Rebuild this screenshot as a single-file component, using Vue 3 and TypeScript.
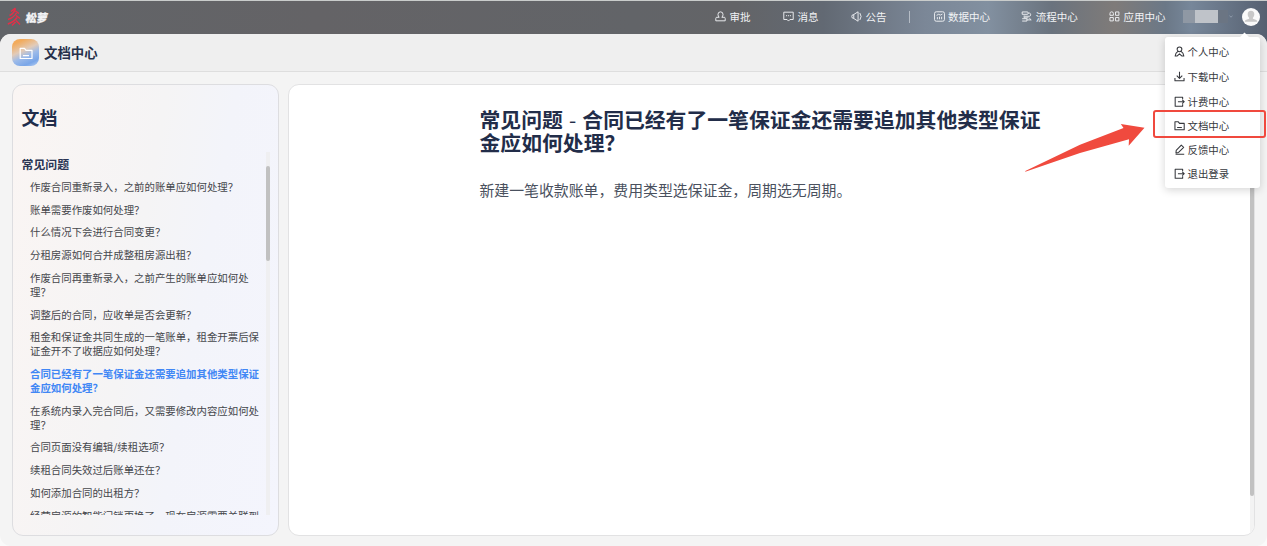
<script setup lang="ts">
type IconName = 'stamp' | 'message' | 'horn' | 'chart' | 'flow' | 'apps' | 'user' | 'download' | 'exit' | 'folder' | 'edit'

const icons: Record<IconName, string> = {
  stamp: 'M5.300 8Q3.800 6.500 3.800 4.300a3.200 3.200 0 0 1 6.400 0Q10.200 6.500 8.700 8M5.300 8H2.200Q1 8 1 9.500V12.500H13V9.500Q13 8 11.800 8H8.700',
  message: 'M1 1.500h12v9.300H8.800L7 12.800 5.200 10.800H1zM3.800 6h1.400M6.300 6h1.400M8.800 6h1.400',
  horn: 'M3.500 4.500v5L9 13V1zM3.500 4.500Q1 4.500 1 7t2.500 2.500M11.200 2.500Q14.500 7 11.200 11.500',
  chart: 'M3 1h8q2.300 0 2.300 2v8q0 2-2.300 2H3Q.700 13 .700 11V3Q.700 1 3 1zM3.300 5.500l2.700-1.300 2 1 2.700-1.300M4.300 10.500V7.800M7 10.500V7.300M9.700 10.500V7.300',
  flow: 'M1.500 1.200h6.300q1.500 0 1.500 1.500T7.800 4.200H1.500zM4 5.700v3h5.500M9.300 2.700h1.500q1.500.300 1.500 2t-1.500 2H4.500M1.500 9.800h6v3h-6M7.500 11.300h5.500M10.500 9l2.500 2.300',
  apps: 'M1.200 3.500a2.200 2.200 0 0 1 4.400-.500v2.500H1.200zM8.300 1.200h4.300v4.300H8.300zM1.200 8.300h4.300v4.300H1.200zM8.300 8.300h4.300v4.300H8.300z',
  user: 'M7 1.200a3 3 0 1 1 0 6 3 3 0 0 1 0-6zM4.800 7Q2 8.500 1.500 12.700h2.700L7 10l2.800 2.700h2.700Q12 8.500 9.200 7',
  download: 'M7 1v8.500M3.500 6L7 9.500 10.500 6M1.200 9v3.500h11.600V9',
  exit: 'M11 4V1.500H1.500v11.500H11V10.500M5 7.200h8M10.500 4.800L13 7.200l-2.500 2.400',
  folder: 'M1.200 2.300h4.300l1.500 2h6v8.200H1.200zM4 9.600h6',
  edit: 'M2.800 8.200L9.300 1.500l3 2.700-6.500 6.500-3.300.6zM2 13h11',
}

const work: { icon: IconName; label: string }[] = [
  { icon: 'stamp', label: '审批' },
  { icon: 'message', label: '消息' },
  { icon: 'horn', label: '公告' },
]
const centers: { icon: IconName; label: string }[] = [
  { icon: 'chart', label: '数据中心' },
  { icon: 'flow', label: '流程中心' },
  { icon: 'apps', label: '应用中心' },
]
const menu: { icon: IconName; label: string }[] = [
  { icon: 'user', label: '个人中心' },
  { icon: 'download', label: '下载中心' },
  { icon: 'exit', label: '计费中心' },
  { icon: 'folder', label: '文档中心' },
  { icon: 'edit', label: '反馈中心' },
  { icon: 'exit', label: '退出登录' },
]
const active = 7
const questions: string[] = [
  '作废合同重新录入，之前的账单应如何处理？',
  '账单需要作废如何处理？',
  '什么情况下会进行合同变更？',
  '分租房源如何合并成整租房源出租？',
  '作废合同再重新录入，之前产生的账单应如何处\n理？',
  '调整后的合同，应收单是否会更新？',
  '租金和保证金共同生成的一笔账单，租金开票后保\n证金开不了收据应如何处理？',
  '合同已经有了一笔保证金还需要追加其他类型保证\n金应如何处理？',
  '在系统内录入完合同后，又需要修改内容应如何处\n理？',
  '合同页面没有编辑/续租选项？',
  '续租合同失效过后账单还在？',
  '如何添加合同的出租方？',
  '经营房源的智能门锁更换了，现在房源需要关联到',
]
</script>

<template>
  <div class="app">
    <header class="topbar">
      <div class="brand">
        <svg class="tree" viewBox="0 0 14 19">
          <path d="M4 4.500L8.500 1M2.500 8.500Q7 6.500 8.500 1.500M8.500 4L12 6.500M1 12.500Q7 10.500 9.500 6M9 8.500l4 3M.800 17Q7 15 10 10.500M9 13.500l4 4M5 18.500L8.500 15" />
        </svg>
        <span>松萝</span>
      </div>
      <nav class="nav">
        <a v-for="n in work" :key="n.label" class="work"><svg viewBox="0 0 14 14"><path :d="icons[n.icon]" /></svg>{{ n.label }}</a>
        <i class="divider"></i>
        <a v-for="n in centers" :key="n.label" class="center"><svg viewBox="0 0 14 14"><path :d="icons[n.icon]" /></svg>{{ n.label }}</a>
      </nav>
      <div class="account">
        <span class="name"><i></i><i></i><i></i></span>
        <svg class="caret" viewBox="0 0 4 3"><path d="M.5.8L2 2.200 3.500.8" /></svg>
        <svg class="avatar" viewBox="0 0 18 18">
          <circle cx="9" cy="9" r="9" fill="#fafafa" />
          <path d="M9 2.800c2.200 0 3.300 1.400 3.300 3.500 0 1.400-.6 2.700-1.400 3.400v1l3.400 1.400q.9.400.9 1.700H2.800q0-1.300.9-1.700l3.400-1.400v-1C6.300 9 5.700 7.700 5.700 6.300c0-2.100 1.100-3.500 3.300-3.500z" fill="#c8c8c8" />
        </svg>
      </div>
    </header>

    <div class="shell">
      <div class="pagehead">
        <span class="badge"><svg viewBox="0 0 14 14"><path :d="icons.folder" /></svg></span>
        <h1>文档中心</h1>
      </div>
      <div class="body">
        <aside class="side">
          <h2>文档</h2>
          <div class="scroller">
            <div class="list">
              <h3>常见问题</h3>
              <ul>
                <li v-for="(q, i) in questions" :key="i" :class="{ active: i === active }">{{ q }}</li>
              </ul>
            </div>
            <div class="track"><div class="thumb"></div></div>
          </div>
        </aside>
        <main class="main">
          <article>
            <h2>常见问题<span class="dash">-</span>合同已经有了一笔保证金还需要追加其他类型保证<br>金应如何处理？</h2>
            <p>新建一笔收款账单，费用类型选保证金，周期选无周期。</p>
          </article>
          <div class="main-track"><div class="main-thumb"></div></div>
        </main>
      </div>
    </div>

    <div class="menu">
      <a v-for="m in menu" :key="m.label"><svg viewBox="0 0 14 14"><path :d="icons[m.icon]" /></svg>{{ m.label }}</a>
    </div>
    <div class="highlight"></div>
    <svg class="arrow" viewBox="0 0 120 50">
      <path d="M.3 48.900L55 22.800 98.500 6 95.800 2l23.700 3.800-15.800 18 .3-6.600L55 31 .3 49.700z" fill="#f04a3e" />
    </svg>
  </div>
</template>

<style>
body { overflow: hidden; background: #fafafa; }
</style>

<style scoped>
* { box-sizing: border-box; }
.app {
  position: relative;
  width: 1267px;
  height: 546px;
  overflow: hidden;
  font-family: "Noto Sans CJK SC", sans-serif;
  font-size: 10.42px;
  color: #45474c;
  background: #fafafa linear-gradient(90deg, #616468 0, #646366 25%, #626468 50%, #636467 58%, #626973 65%, #7b8797 73%, #8290a0 78%, #6a737e 83%, #7f7b79 88%, #6b7887 92%, #77879a 94%, #566070 100%) 0 0 / 100% 50px no-repeat;
}
h1, h2, h3, p, ul { margin: 0; padding: 0; }
svg path { stroke-linejoin: round; }
.topbar {
  display: flex;
  align-items: center;
  height: 34px;
  padding-bottom: 2px;
  border-top: 1px solid #c9cccb;
  color: #f2f3f5;
}
.brand { display: flex; flex: none; align-items: center; width: 715px; padding-left: 7px; gap: 5px; }
.tree { width: 14px; height: 19px; fill: none; stroke: #e23048; stroke-width: 1.5; }
.brand span { font-size: 11px; line-height: 16px; font-weight: 900; transform: skewX(-8deg); -webkit-text-stroke: .3px #f2f3f5; }
.nav { display: flex; flex: none; align-items: center; width: 467.5px; }
.nav a { display: flex; flex: none; align-items: center; white-space: nowrap; font-size: 10.5px; }
.nav svg { width: 11px; height: 11px; margin-right: 3.5px; fill: none; stroke: #eef0f3; stroke-width: 1.2; }
.work { width: 68px; }
.work:nth-child(3) { width: 58px; }
.divider { flex: none; width: 1px; height: 12px; margin-right: 23.5px; background: #b5bcc5; }
.center { width: 87.8px; }
.account { display: flex; align-items: center; }
.name { display: flex; width: 45px; height: 13px; }
.name i { width: 12px; background: #8f98a4; }
.name i:nth-child(2) { width: 23px; background: #bfc3c9; }
.name i:nth-child(3) { width: 10px; background: #6b7583; }
.caret { width: 4px; height: 3px; margin: 0 9px 0 1px; fill: none; stroke: #9ba6b5; stroke-width: .8; }
.avatar { width: 18px; height: 18px; }
.shell { height: 512px; background: #f4f4f4; border-radius: 11px; overflow: hidden; }
.pagehead {
  display: flex;
  align-items: center;
  height: 38px;
  padding-left: 12px;
  background: #efefef;
  border-bottom: 1px solid #dedede;
}
.badge {
  display: flex;
  align-items: center;
  justify-content: center;
  width: 27px;
  height: 27px;
  border-radius: 8px;
  background: linear-gradient(155deg, #f2ab5c 15%, #e2cbb8 42%, #9dbbe9 60%, #79a6e8 82%, #b9d1f3 100%);
}
.badge svg { width: 14px; height: 14px; fill: none; stroke: #fff; stroke-width: 1.2; }
.pagehead h1 { margin-left: 5px; padding-bottom: 2px; font-size: 13.4px; line-height: 20px; color: #26304a; }
.body { display: flex; gap: 9px; padding: 12px 12px 0; }
.side {
  width: 267px;
  height: 452px;
  padding: 20px 8px 0 8.500px;
  border: 1px solid #dddde0;
  border-radius: 11px;
  background: linear-gradient(100deg, #faf5f3 0, #f5f4f5 45%, #f3f4fa 65%, #f4f5fd 100%);
}
.side h2 { font-size: 17.9px; line-height: 24px; color: #202c4b; }
.scroller { display: flex; justify-content: space-between; height: 363px; margin-top: 23px; overflow: hidden; }
.list { width: 240px; }
.list h3 { font-size: 11.9px; line-height: 16px; margin-top: 4px; color: #2a3553; }
.list ul { list-style: none; padding: 8px 0 0 8.500px; }
.list li { margin-bottom: 8.73px; line-height: 14px; white-space: pre; }
.list li.active { color: #4187f5; font-weight: 700; }
.track { width: 4px; background: #efeff1; }
.thumb { height: 95px; margin-top: 14px; border-radius: 2px; background: #c1c1c1; }
.main {
  display: flex;
  justify-content: space-between;
  width: 967px;
  height: 452px;
  border: 1px solid #e2e2e3;
  border-radius: 11px;
  background: #fff;
  overflow: hidden;
}
article { padding: 23px 0 0 190.500px; }
article h2 { font-size: 20.83px; line-height: 23px; white-space: nowrap; color: #222d49; }
.dash { display: inline-block; width: 19.5px; text-align: center; font-weight: 400; }
article p { margin-top: 25px; font-size: 14.88px; line-height: 22px; color: #4a515e; }
.main-track { width: 4px; background: #f3f3f3; }
.main-thumb { height: 411px; background: #c1c1c1; border-radius: 2px; }
.menu {
  position: absolute;
  left: 1165px;
  top: 37px;
  width: 95px;
  height: 151px;
  padding: 1.6px 9px 0;
  border-radius: 3px;
  background: #fff;
  box-shadow: 0 2px 8px rgba(0, 0, 0, .17);
}
.menu::before {
  content: "";
  position: absolute;
  left: 76px;
  top: -3px;
  width: 7px;
  height: 7px;
  background: #fff;
  transform: rotate(45deg);
}
.menu a { display: flex; align-items: center; height: 24px; color: #36383d; }
.menu a:nth-child(-n+2) { height: 25.3px; }
.menu svg { width: 11px; height: 11px; margin-right: 2.500px; fill: none; stroke: #36383d; stroke-width: 1.35; }
.highlight {
  position: absolute;
  left: 1153px;
  top: 110px;
  width: 113px;
  height: 28px;
  border: 2px solid #f0493e;
  border-radius: 3px;
}
.arrow { position: absolute; left: 1025px; top: 122px; width: 120px; height: 50px; }
</style>
